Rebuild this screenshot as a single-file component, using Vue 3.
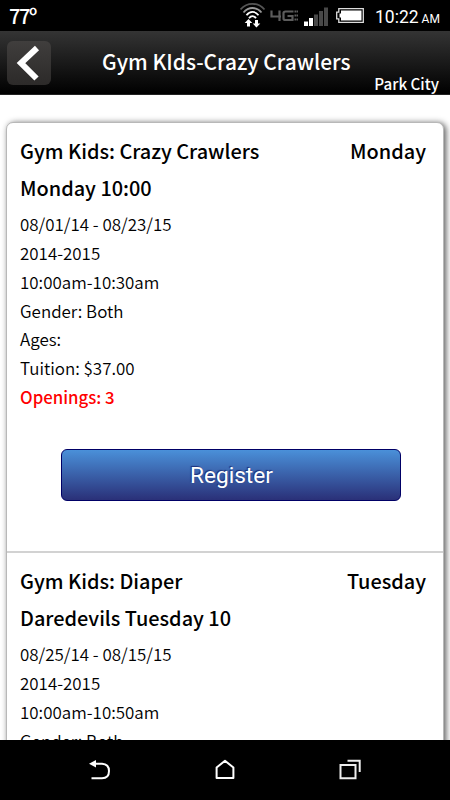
<script setup>
const classes = [
  {
    title: 'Gym Kids: Crazy Crawlers',
    day: 'Monday',
    subtitle: 'Monday 10:00',
    details: ['08/01/14 - 08/23/15', '2014-2015', '10:00am-10:30am', 'Gender: Both', 'Ages:', 'Tuition: $37.00'],
    openings: 3
  },
  {
    title: 'Gym Kids: Diaper',
    day: 'Tuesday',
    subtitle: 'Daredevils Tuesday 10',
    details: ['08/25/14 - 08/15/15', '2014-2015', '10:00am-10:50am', 'Gender: Both'],
    openings: null
  }
]
</script>

<template>
  <div class="phone">
    <!-- Status bar -->
    <div class="status-bar">
      <span class="temperature">77º</span>
      <svg class="status-icons" width="126" height="31" viewBox="0 0 126 31">
        <!-- wifi -->
        <g fill="none" stroke-width="1.8">
          <path d="M0.5 9.5C7 2 18 2 24.500 9.500" stroke="#555" />
          <path d="M3.500 12.500C8.500 6.500 16.500 6.500 21.500 12.500" stroke="#999" />
          <path d="M6.500 15.200C10 10.800 15 10.800 18.500 15.200" stroke="#fff" />
          <path d="M9 18.200C11 15.500 14 15.500 16 18.200" stroke="#fff" />
        </g>
        <path d="M8.500 19L12.300 23H10V26.500H7V23H4.700ZM15 20H18V23.500H20.300L16.500 27.600L12.700 23.500H15Z" fill="#fff" />
        <!-- 4G LTE -->
        <g fill="none" stroke="#5c5c5c" stroke-width="2.200">
          <path d="M31.500 10.500V16.500H41M39.500 10.500V21" />
          <path d="M53.500 11.500H45.500Q43.500 11.500 43.500 13V18.500Q43.500 20 45.500 20H52.500V16H47.500" />
          <path d="M54.500 11.500H58M54.500 15.500H58M54.500 19.500H58" stroke-width="2.200" stroke-dasharray="1.600 0.400" />
        </g>
        <!-- signal -->
        <path d="M64 21.500H68V26H64ZM69 18H73V26H69Z" fill="#fff" />
        <path d="M74 14.500H78V26H74ZM79 11H83V26H79ZM84 7.500H88V26H84Z" fill="#484848" />
        <!-- battery -->
        <path d="M98.800 8.700H123.300V22.300H98.800V18.800H96.700V12.200H98.800Z" fill="none" stroke="#ddd" stroke-width="1.300" />
        <path d="M101 10.500H121.500V20.500H101V17.500H99.500V13.500H101Z" fill="#fff" />
      </svg>
      <div class="clock">
        <span>10:22</span>
        <small>AM</small>
      </div>
    </div>

    <!-- Header -->
    <header class="header">
      <button class="back-button" aria-label="Back">
        <svg width="44" height="44" viewBox="0 0 44 44">
          <path d="M30 7L14 22L29.500 37.500" fill="none" stroke="#fff" stroke-width="6" />
        </svg>
      </button>
      <div class="header-text">
        <h1>Gym KIds-Crazy Crawlers</h1>
        <span class="location">Park City</span>
      </div>
    </header>

    <!-- Class list -->
    <main class="content">
      <div class="class-list">
        <section v-for="item in classes" :key="item.title" class="class-item">
          <div class="class-head">
            <h2>{{ item.title }}</h2>
            <h2 class="day">{{ item.day }}</h2>
          </div>
          <h2>{{ item.subtitle }}</h2>
          <div class="details">
            <p v-for="line in item.details" :key="line">{{ line }}</p>
            <p v-if="item.openings" class="openings">Openings: {{ item.openings }}</p>
          </div>
          <button v-if="item.openings" class="register">Register</button>
        </section>
      </div>
    </main>

    <!-- Navigation bar -->
    <nav class="nav-bar">
      <svg width="24" height="22" viewBox="0 0 24 22">
        <path d="M5 4.700H14Q21 5 21 12Q21 19.200 14 19.200H3.500" fill="none" stroke="#fff" stroke-width="2" />
        <path d="M1 4.700L8 1V8.500Z" fill="#fff" />
      </svg>
      <svg width="24" height="22" viewBox="0 0 24 22">
        <path d="M3.600 19.100V8.500L12 1.800L20.400 8.500V19.100Z" fill="none" stroke="#fff" stroke-width="2" stroke-linejoin="round" />
      </svg>
      <svg width="24" height="22" viewBox="0 0 24 22">
        <path d="M2.500 6H17.500V19.200H2.500ZM9.500 1.800H21.700V13" fill="none" stroke="#eee" stroke-width="2" />
      </svg>
    </nav>
  </div>
</template>

<style>
body {
  margin: 0;
  background: #fff;
}
</style>

<style scoped>
.phone {
  width: 450px;
  height: 800px;
  display: flex;
  flex-direction: column;
  overflow: hidden;
  background: #fff;
  color: #000;
  font-family: "Noto Sans CJK JP", sans-serif;
}

/* Status bar */
.status-bar {
  height: 31px;
  flex: none;
  display: flex;
  align-items: center;
  background: #000;
  color: #fff;
}

.temperature {
  width: 231px;
  padding-left: 9px;
  font-size: 20px;
  font-weight: 500;
  line-height: 31px;
  letter-spacing: -1.4px;
}

.status-icons {
  flex: none;
}

.clock {
  display: flex;
  align-items: baseline;
  gap: 3px;
  padding: 2px 0 0 9px;
  font-family: Roboto, sans-serif;
  font-size: 17.5px;
  white-space: nowrap;
}

.clock small {
  font-size: 12px;
}

/* Header */
.header {
  height: 64px;
  flex: none;
  box-sizing: border-box;
  display: flex;
  padding: 10px 11px 0 7px;
  border-bottom: 1px solid #222;
  background: linear-gradient(#343434, #000);
  color: #fff;
}

.back-button {
  width: 44px;
  height: 44px;
  padding: 0;
  border: 0;
  border-radius: 6px;
  background: linear-gradient(#403e3d, #2c2a29);
}

.back-button svg {
  display: block;
}

.header-text {
  flex: 1;
  display: flex;
  flex-direction: column;
}

.header h1 {
  margin: 4px 0 0 51px;
  font-size: 20.9px;
  font-weight: 500;
  line-height: 32px;
  white-space: nowrap;
}

.location {
  align-self: flex-end;
  margin-top: -5px;
  font-size: 15.2px;
  font-weight: 500;
  line-height: 22px;
}

/* Class list */
.content {
  flex: 1;
  min-height: 0;
  padding: 27px 6px 0 6px;
  overflow: hidden;
}

.class-list {
  height: 720px;
  box-sizing: border-box;
  border: 1px solid #b8b8b8;
  border-radius: 7px;
  box-shadow: 2px 1px 6px rgba(0, 0, 0, 0.65);
  background: #fff;
}

.class-item {
  display: flex;
  flex-direction: column;
  height: 430px;
  box-sizing: border-box;
  padding: 9px 17px 0 13px;
  border-bottom: 2px solid #d2d2d2;
}

.class-item:last-child {
  border: 0;
}

.class-head {
  display: flex;
  justify-content: space-between;
}

h2 {
  margin: 0;
  font-size: 19.9px;
  font-weight: 500;
  line-height: 37px;
  white-space: nowrap;
}

.details {
  padding-top: 4.4px;
}

.details p {
  margin: 0;
  font-size: 16.95px;
  font-weight: 350;
  line-height: 28.7px;
}

.details .openings {
  color: #f00;
  font-size: 16.8px;
  font-weight: 500;
}

.register {
  width: 340px;
  height: 52px;
  flex: none;
  margin: 37.6px 0 0 41px;
  padding: 1px 0 0 1px;
  border: 1px solid #000066;
  border-radius: 6px;
  background: linear-gradient(#4a90d9, #2a3078);
  color: #fff;
  font-family: Roboto, sans-serif;
  font-size: 22.6px;
  text-shadow: -1px -1px 1px #1c2f78;
}

/* Navigation bar */
.nav-bar {
  height: 60px;
  flex: none;
  box-sizing: border-box;
  display: flex;
  justify-content: center;
  gap: 101px;
  padding-top: 19px;
  background: #000;
}
</style>
